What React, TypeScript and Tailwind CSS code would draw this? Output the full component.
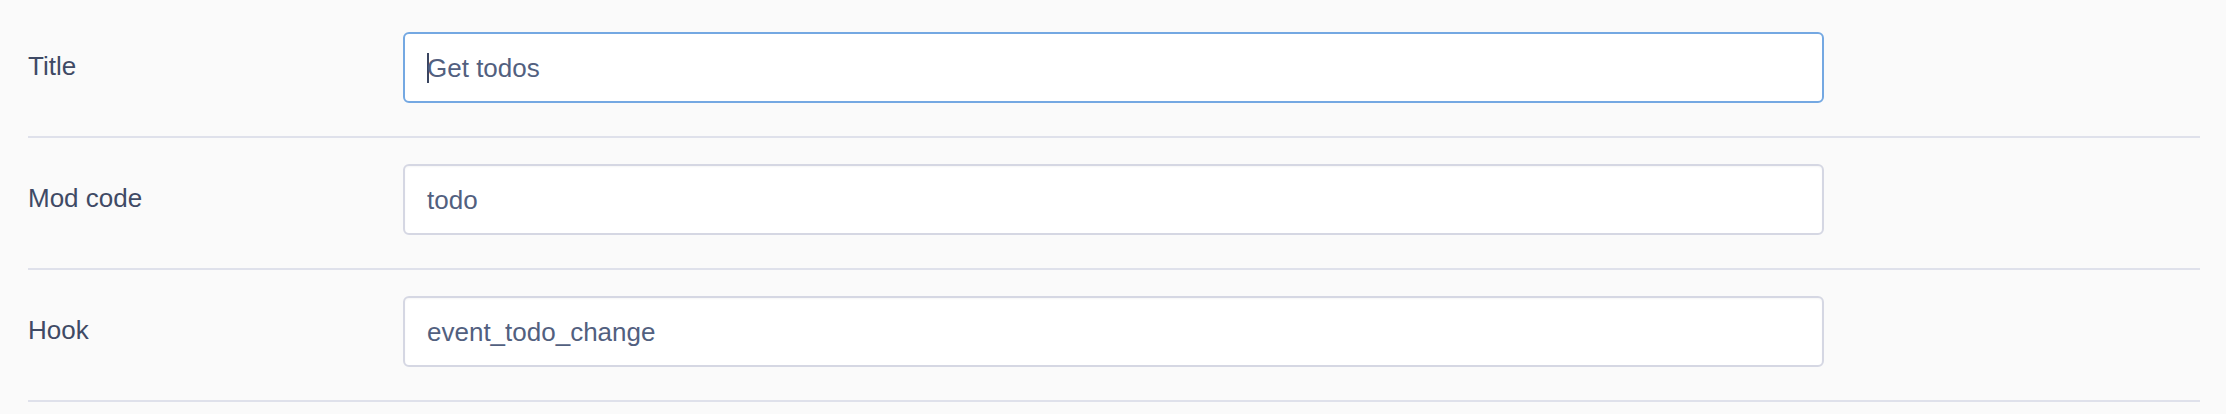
const rows = [
  { label: "Title", value: "Get todos", focused: true },
  { label: "Mod code", value: "todo", focused: false },
  { label: "Hook", value: "event_todo_change", focused: false },
];

export default function App() {
  return (
    <div
      className="min-h-screen w-full bg-[#fafafa] pl-[28px] pr-[26px] pt-[6px]"
      style={{ fontFamily: '"Liberation Sans", Arial, sans-serif' }}
    >
      {rows.map((row) => (
        <div
          key={row.label}
          className="flex items-center border-b-2 border-[#dfe1eb] pt-[26px] pb-[33px]"
        >
          <label className="w-[375px] shrink-0 -mt-[3px] text-[26px] leading-none text-[#3f4a65]">
            {row.label}
          </label>
          <div
            className={
              row.focused
                ? "flex h-[71px] w-[1421px] items-center rounded-[6px] border-2 border-[#74a8e2] bg-white px-[22px] text-[26px] text-[#52607f]"
                : "flex h-[71px] w-[1421px] items-center rounded-[6px] border-2 border-[#d5d7e3] bg-white px-[22px] text-[26px] text-[#52607f] shadow-[inset_0_1px_2px_rgba(0,0,0,0.04)]"
            }
          >
            {row.focused && (
              <span className="-mr-[2px] h-[30px] w-[2px] shrink-0 bg-[#3a4560]" />
            )}
            <span className="leading-none">{row.value}</span>
          </div>
        </div>
      ))}
    </div>
  );
}
